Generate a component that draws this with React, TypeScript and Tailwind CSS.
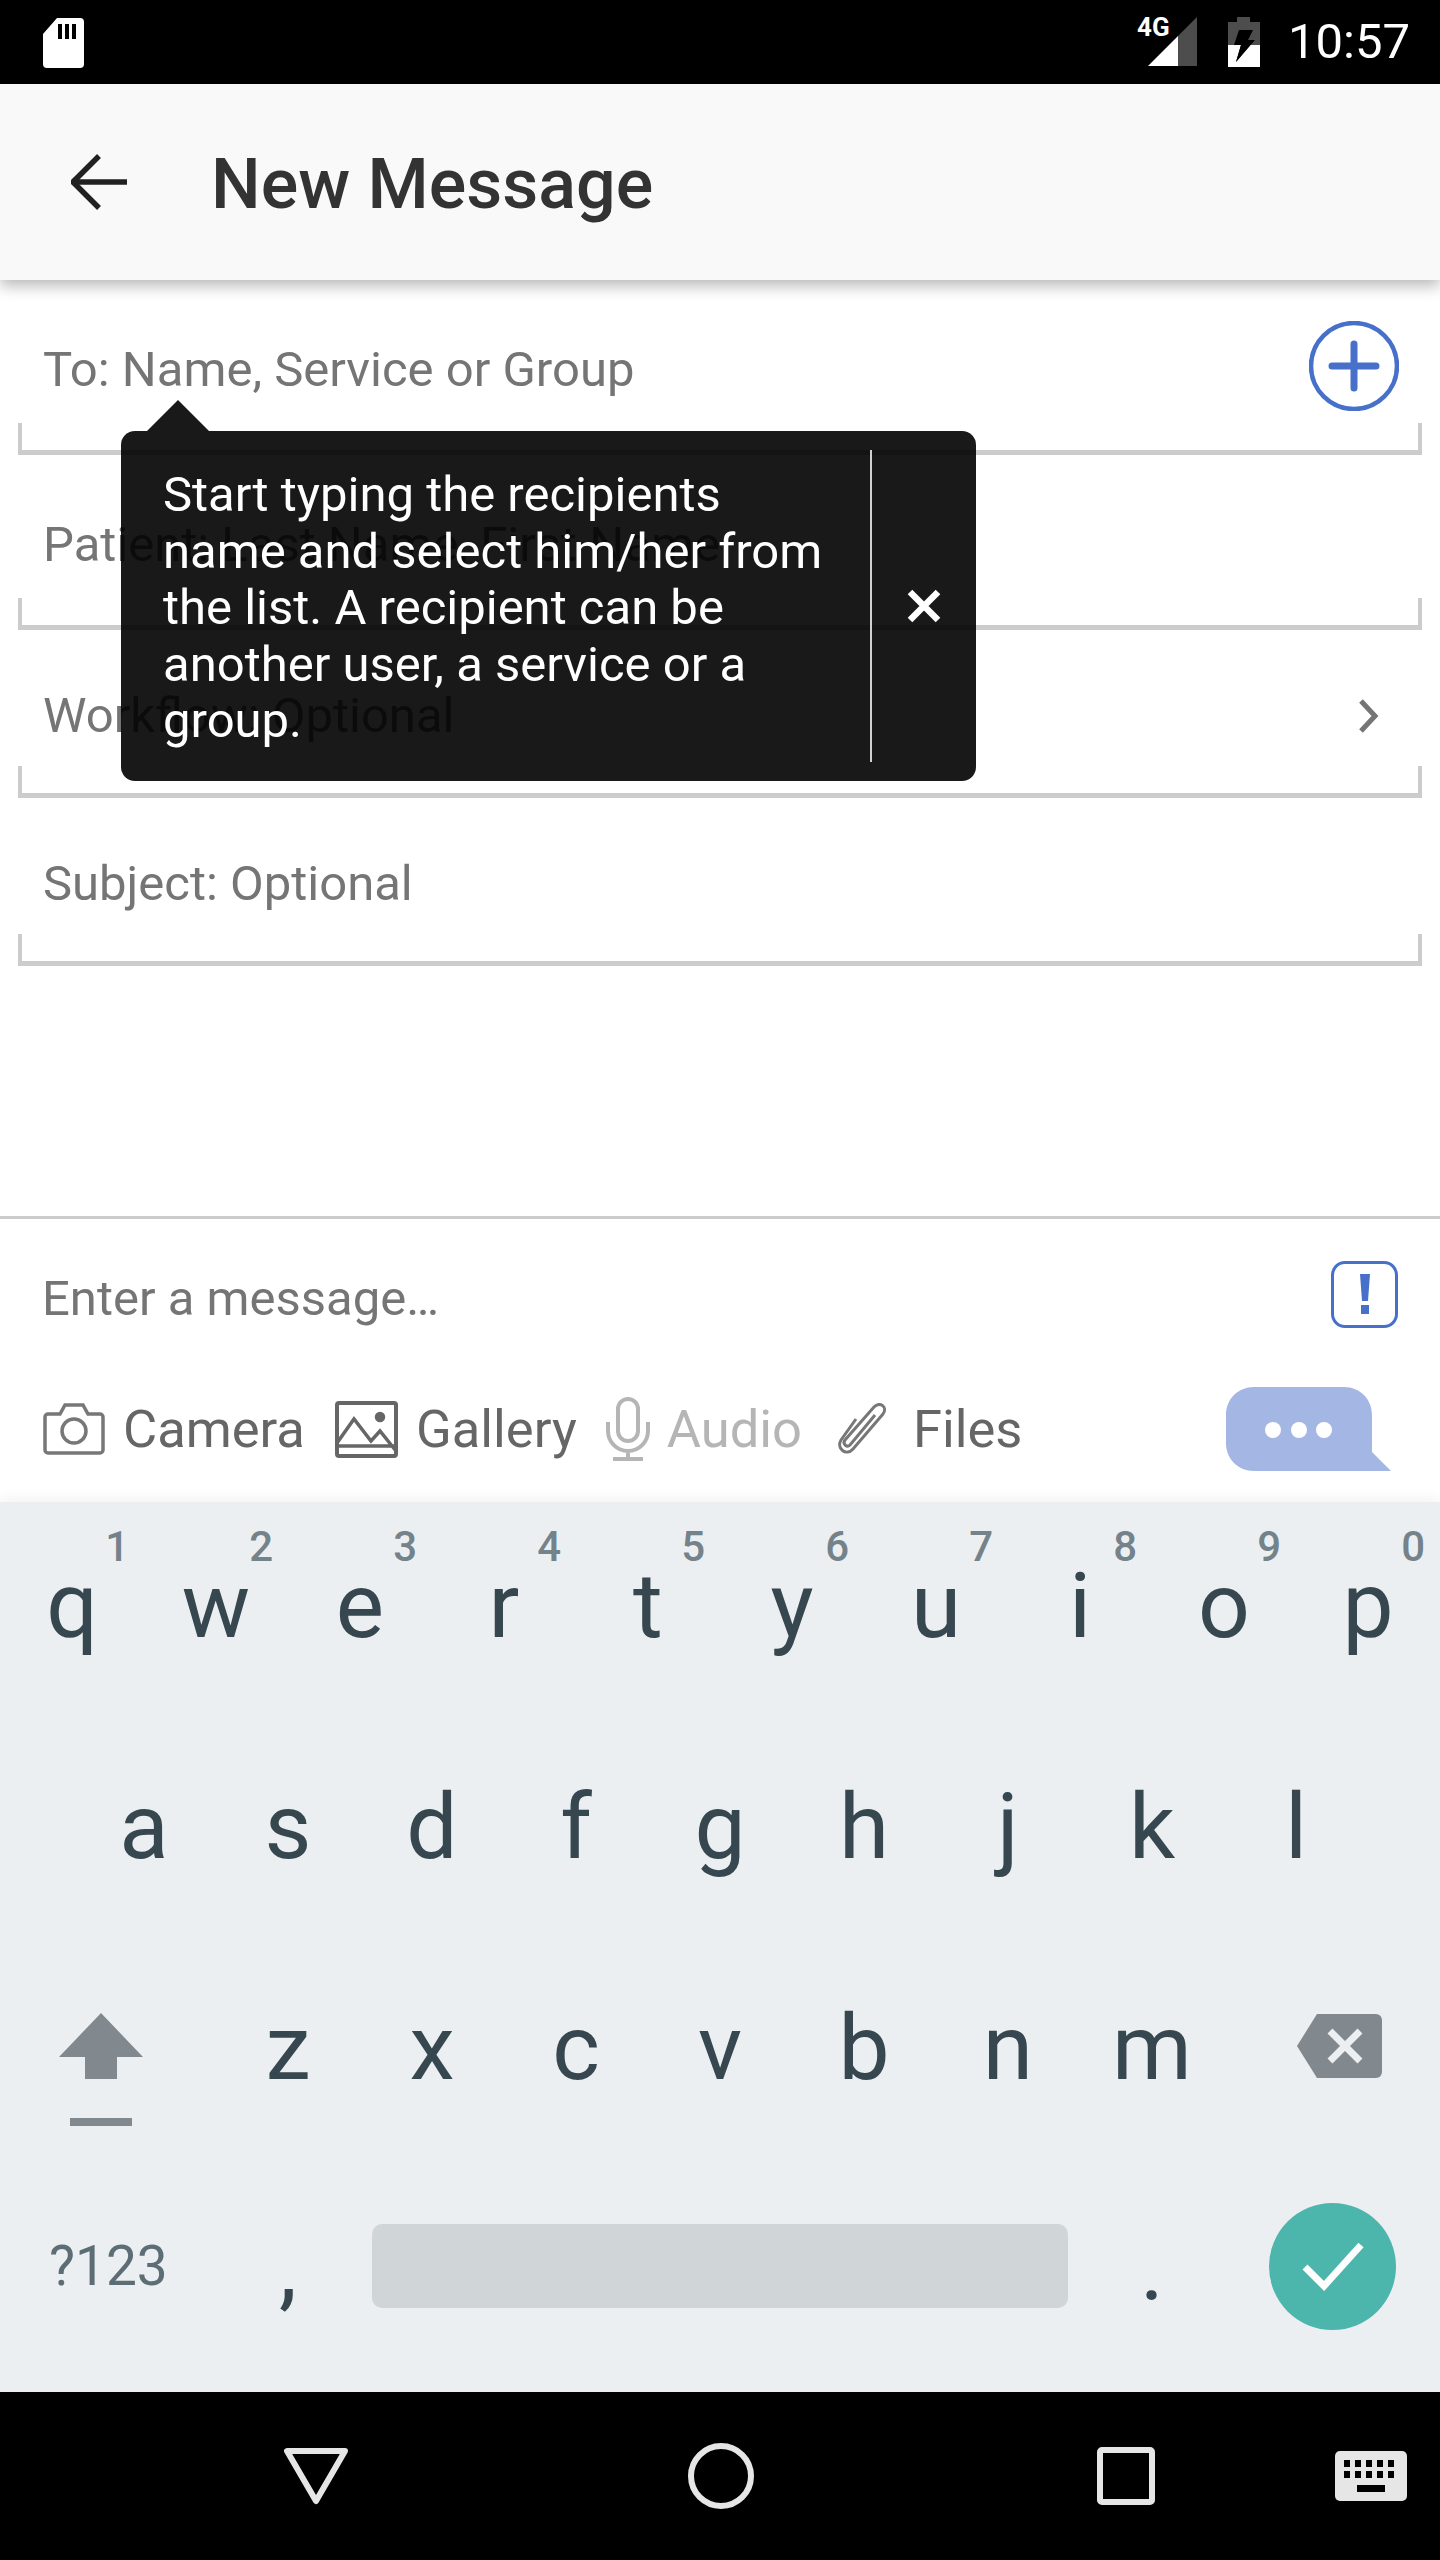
const roboto = "font-['Roboto',sans-serif]";

function Field({ label, right, heightClass }: { label: string; right?: React.ReactNode; heightClass: string }) {
  return (
    <div className={`relative flex flex-col ${heightClass}`}>
      <div className="flex flex-1 items-center justify-between pl-[43px] pr-[41px] pt-[36px]">
        <span className="text-[49px] leading-[56px] text-[#757575] whitespace-nowrap">{label}</span>
        {right}
      </div>
      <div className="mx-[18px] h-[32px] border-x-[4px] border-b-[5px] border-[#cccccc]" />
    </div>
  );
}

function StatusBar() {
  return (
    <div className="flex h-[84px] items-center justify-between bg-black pl-[43px] pr-[30px]">
      <svg width="41" height="51" viewBox="0 0 41 51">
        <path d="M14 1h23a4 4 0 0 1 4 4v42a4 4 0 0 1-4 4H4a4 4 0 0 1-4-4V17z" fill="#fff" />
        <path d="M15 7h4v15h-4zM22 7h4v15h-4zM29 7h4v15h-4z" fill="#000" />
      </svg>
      <div className="flex items-center">
        <div className="relative h-[50px] w-[62px]">
          <svg width="50" height="50" viewBox="0 0 50 50" className="absolute right-0 top-0">
            <path d="M49 0v49H30V19z" fill="#4d4d4d" />
            <path d="M30 19v30H0z" fill="#fff" />
          </svg>
          <span className="absolute left-[1px] top-[-5px] text-[26px] font-bold leading-[30px] text-white">4G</span>
        </div>
        <svg width="34" height="51" viewBox="0 0 34 51" className="ml-[29px]">
          <path d="M10 0h13v5h10v23H1V5h9z" fill="#4d4d4d" />
          <path d="M1 28h32v22H1z" fill="#fff" />
          <path d="M12 13h14l-5 10h7L9 45l5-17H7z" fill="#000" />
          <path d="M14 28h9l-14 17z" fill="#000" />
        </svg>
        <span className="ml-[27px] text-[49px] leading-[56px] text-white">10:57</span>
      </div>
    </div>
  );
}

function Header() {
  return (
    <div className="relative z-10 flex h-[196px] items-center bg-[#f9f9f9] pl-[71px] shadow-[0_6px_14px_rgba(0,0,0,0.28)]">
      <svg width="56" height="56" viewBox="0 0 56 56" fill="none" stroke="#212121" strokeWidth="5.5">
        <path d="M56 28H4" />
        <path d="M28 2 2 28l26 26" />
      </svg>
      <span className="ml-[84px] pt-[3px] text-[70px] font-medium leading-[80px] text-[#333333]">New Message</span>
    </div>
  );
}

function Tooltip() {
  return (
    <div className="absolute left-[121px] top-[431px] z-20 flex h-[350px] w-[855px] rounded-[14px] bg-black/90 text-white">
      <div className="absolute left-[26px] top-[-31px] h-0 w-0 border-x-[31px] border-b-[31px] border-x-transparent border-b-black/90" />
      <p className="w-[749px] pl-[42px] pr-[30px] pt-[36px] text-[49px] leading-[56.5px] text-white">
        Start typing the recipients name and select him/her from the list. A recipient can be another user, a service or a group.
      </p>
      <div className="my-[19px] w-[2px] bg-white/80" />
      <div className="flex flex-1 items-center justify-center">
        <svg width="34" height="34" viewBox="0 0 34 34" stroke="#fff" strokeWidth="6.5">
          <path d="M3 3l28 28M31 3 3 31" />
        </svg>
      </div>
    </div>
  );
}

function Composer() {
  return (
    <div className="flex h-[286px] flex-col border-t-[3px] border-[#cccccc]">
      <div className="flex h-[150px] items-center justify-between pl-[42px] pr-[42px]">
        <span className="mt-[10px] text-[49px] leading-[56px] text-[#757575]">Enter a message…</span>
        <div className="flex h-[67px] w-[67px] items-center justify-center rounded-[14px] border-[3.5px] border-[#4670c9]">
          <svg width="10" height="40" viewBox="0 0 10 40" fill="#4670c9">
            <path d="M0 0h10L8 27H2zM1 31h8v9H1z" />
          </svg>
        </div>
      </div>
      <div className="flex items-center pl-[43px] pt-[18px] text-[52.5px] leading-[60px] text-[#666666]">
        <svg width="62" height="52" viewBox="0 0 62 52" fill="none" stroke="#777" strokeWidth="3.5">
          <path d="M5 11h12l5-9h18l5 9h12a3 3 0 0 1 3 3v33a3 3 0 0 1-3 3H5a3 3 0 0 1-3-3V14a3 3 0 0 1 3-3z" />
          <circle cx="31" cy="28" r="12" />
        </svg>
        <span className="ml-[18px]">Camera</span>
        <svg width="63" height="57" viewBox="0 0 63 57" fill="none" stroke="#666" strokeWidth="3.5" className="ml-[30px]">
          <rect x="2" y="2" width="59" height="53" rx="2" strokeWidth="4" />
          <path d="M2 42 19 18l17 22 9-10 16 20M2 45l59 0" />
          <circle cx="45" cy="16" r="3.5" fill="#666" />
        </svg>
        <span className="ml-[18px]">Gallery</span>
        <svg width="46" height="64" viewBox="0 0 46 64" fill="none" stroke="#b5b5b5" strokeWidth="4" className="ml-[28px]">
          <rect x="13" y="2" width="20" height="42" rx="10" />
          <path d="M3 25v9a20 20 0 0 0 40 0v-9M23 54v7M8 62h30" />
        </svg>
        <span className="ml-[16px] text-[#b5b5b5]">Audio</span>
        <svg width="56" height="54" viewBox="0 0 56 54" fill="none" stroke="#777" strokeWidth="3" className="ml-[32px]">
          <path d="M22 17 7 38c-5 8 5 17 12 9L49 12c5-7-3-13-9-7L11 38c-3 4 2 8 5 5l25-30" />
        </svg>
        <span className="ml-[23px]">Files</span>
        <div className="relative ml-auto mr-[49px]">
          <svg width="165" height="84" viewBox="0 0 165 84" fill="#a4b6e3" className="block">
            <path d="M28 0h90c16 0 28 12 28 28v37l19 19H28C12 84 0 72 0 56V28C0 12 12 0 28 0z" />
          </svg>
          <div className="absolute left-[39px] top-[35px] flex gap-[9.5px]">
            <span className="h-[16px] w-[16px] rounded-full bg-white" />
            <span className="h-[16px] w-[16px] rounded-full bg-white" />
            <span className="h-[16px] w-[16px] rounded-full bg-white" />
          </div>
        </div>
      </div>
    </div>
  );
}

function Key({ ch, hint }: { ch: string; hint?: string }) {
  return (
    <div className="relative flex w-[144px] justify-center text-[91px] leading-[106px] text-[#37474f]">
      {ch}
      {hint && (
        <span className="absolute right-[15px] top-[-30px] text-[42px] font-medium leading-[48px] text-[#74828a]">{hint}</span>
      )}
    </div>
  );
}

function Keyboard() {
  return (
    <div className="h-[890px] bg-[#eceff1] shadow-[0_-6px_10px_rgba(0,0,0,0.04)]">
      <div className="flex h-[222px] pt-[51px]">
        {"qwertyuiop".split("").map((c, i) => (
          <Key key={c} ch={c} hint={String((i + 1) % 10)} />
        ))}
      </div>
      <div className="flex h-[220px] justify-center pt-[50px]">
        {"asdfghjkl".split("").map((c) => (
          <Key key={c} ch={c} />
        ))}
      </div>
      <div className="relative flex h-[222px] items-start pl-[216px] pt-[51px]">
        {"zxcvbnm".split("").map((c) => (
          <Key key={c} ch={c} />
        ))}
        <div className="absolute left-[59px] top-[69px] flex flex-col items-center">
          <svg width="84" height="66" viewBox="0 0 84 66" fill="#82898e">
            <path d="M42 0l42 44H58v22H26V44H0z" />
          </svg>
          <div className="mt-[39px] h-[8px] w-[62px] bg-[#82898e]" />
        </div>
        <svg width="85" height="64" viewBox="0 0 85 64" className="absolute left-[1297px] top-[70px]">
          <path d="M20 0h59a6 6 0 0 1 6 6v52a6 6 0 0 1-6 6H20L0 32z" fill="#82898e" />
          <path d="M33 17l30 30M63 17 33 47" stroke="#eceff1" strokeWidth="7" />
        </svg>
      </div>
      <div className="flex h-[226px] items-center pb-[26px]">
        <span className="w-[216px] pl-[49px] text-[55px] leading-[64px] text-[#5d6d75]">?123</span>
        <div className="mt-[4px] w-[144px] text-center text-[91px] leading-[106px] text-[#37474f]">,</div>
        <div className="mx-[12px] h-[84px] w-[696px] rounded-[10px] bg-[#d0d5d8]" />
        <div className="mt-[4px] w-[144px] text-center text-[91px] leading-[106px] text-[#37474f]">.</div>
        <div className="ml-[45px] flex h-[127px] w-[127px] items-center justify-center rounded-full bg-[#4db6ac]">
          <svg width="62" height="50" viewBox="0 0 62 50" fill="none" stroke="#fff" strokeWidth="7">
            <path d="M3 26l19 19L59 4" />
          </svg>
        </div>
      </div>
    </div>
  );
}

function NavBar() {
  return (
    <div className="flex h-[168px] items-center bg-black pl-[283px]">
      <svg width="66" height="58" viewBox="0 0 66 58" fill="none" stroke="#e6e6e6" strokeWidth="6" strokeLinejoin="round">
        <path d="M4 4h58L33 54z" />
      </svg>
      <svg width="66" height="66" viewBox="0 0 66 66" fill="none" stroke="#e6e6e6" strokeWidth="6" className="ml-[339px]">
        <circle cx="33" cy="33" r="30" />
      </svg>
      <svg width="58" height="58" viewBox="0 0 58 58" fill="none" stroke="#e6e6e6" strokeWidth="6" className="ml-[343px]">
        <rect x="3" y="3" width="52" height="52" rx="2" />
      </svg>
      <svg width="72" height="50" viewBox="0 0 72 50" className="ml-[180px]">
        <rect width="72" height="50" rx="5" fill="#e6e6e6" />
        <path d="M9 9h6v7H9zM20 9h6v7h-6zM31 9h6v7h-6zM42 9h6v7h-6zM53 9h6v7h-6zM9 20h6v7H9zM20 20h6v7h-6zM31 20h6v7h-6zM42 20h6v7h-6zM53 20h6v7h-6zM22 34h28v7H22z" fill="#000" />
      </svg>
    </div>
  );
}

export default function App() {
  return (
    <div className={`relative flex h-[2560px] w-[1440px] flex-col overflow-hidden bg-white ${roboto}`}>
      <StatusBar />
      <Header />
      <Field
        label="To: Name, Service or Group"
        heightClass="h-[175px]"
        right={
          <svg width="90" height="90" viewBox="0 0 90 90" fill="none" stroke="#4670c9" className="mt-[-8px]">
            <circle cx="45" cy="45" r="43" strokeWidth="4.5" />
            <path d="M45 23v44M23 45h44" strokeWidth="7" strokeLinecap="round" />
          </svg>
        }
      />
      <Field label="Patient: Last Name, First Name" heightClass="h-[175px]" />
      <Field
        label="Workflow: Optional"
        heightClass="h-[168px]"
        right={
          <svg width="24" height="36" viewBox="0 0 24 36" fill="none" stroke="#757575" strokeWidth="5" className="mr-[18px]">
            <path d="M4 3l14 15L4 33" />
          </svg>
        }
      />
      <Field label="Subject: Optional" heightClass="h-[168px]" />
      <div className="flex-1" />
      <Composer />
      <Keyboard />
      <NavBar />
      <Tooltip />
    </div>
  );
}
